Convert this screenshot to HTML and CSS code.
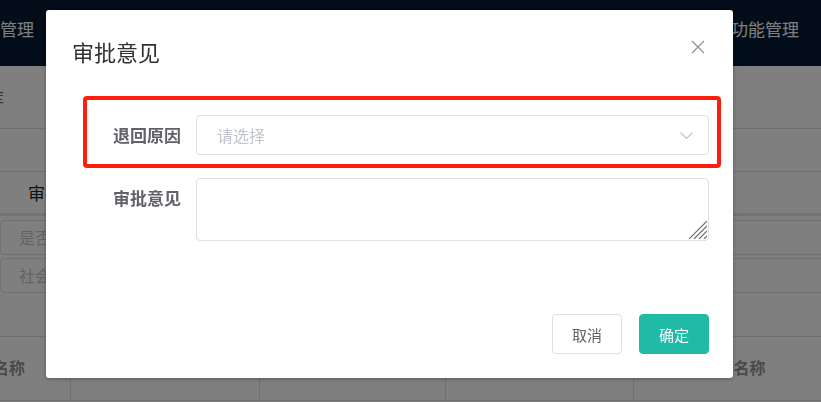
FILE: index.html
```html
<!DOCTYPE html>
<html lang="zh-CN">
<head>
    <meta charset="UTF-8">
    <meta name="viewport" content="width=device-width, initial-scale=1.0">
    <title>审批意见</title>
    <link rel="stylesheet" href="styles.css">
</head>
<body>
    <div class="page">
        <nav class="topnav">
            <span class="nav-item nav-left">管理</span>
            <span class="nav-item">功能管理</span>
        </nav>

        <div class="crumb"><span class="crumb-text">数据库</span></div>
        <div class="toolbar"></div>

        <div class="tabs">
            <span class="tab-item">审批记录</span>
        </div>

        <div class="filters">
            <div class="filter-box">是否通过</div>
            <div class="filter-box">社会信用代码</div>
        </div>

        <div class="table-head">
            <div class="th th-first">单位名称</div>
            <div class="th th-2">申报时间</div>
            <div class="th th-3">审批状态</div>
            <div class="th th-4">联系人</div>
            <div class="th th-5">项目名称</div>
        </div>
    </div>

    <!-- 遮罩 + 弹窗 -->
    <div class="mask"></div>
    <div class="dialog">
        <div class="dialog-header">
            <span class="dialog-title">审批意见</span>
            <button class="dialog-close" aria-label="关闭">
                <svg width="14" height="14" viewBox="0 0 14 14">
                    <path d="M1 1 L13 13 M13 1 L1 13" stroke="#909399" stroke-width="1.3" fill="none"/>
                </svg>
            </button>
        </div>

        <div class="dialog-body">
            <div class="form-item marked">
                <label class="form-label">退回原因</label>
                <div class="select">
                    <span class="placeholder">请选择</span>
                    <svg class="arrow" width="13" height="8" viewBox="0 0 13 8">
                        <path d="M0.5 0.5 L6.5 6.5 L12.5 0.5" stroke="#c0c4cc" stroke-width="1.2" fill="none"/>
                    </svg>
                </div>
                <div class="mark"></div>
            </div>
            <div class="form-item">
                <label class="form-label">审批意见</label>
                <div class="textarea-wrap">
                    <textarea class="textarea"></textarea>
                    <!-- 拖拽角标 -->
                    <svg class="resize-grip" width="18" height="18" viewBox="0 0 18 18">
                        <path d="M18 0 L0 18 M18 5 L5 18 M18 10 L10 18 M18 15 L15 18" stroke="#6b6b6b" stroke-width="1.2" fill="none"/>
                    </svg>
                </div>
            </div>
        </div>

        <div class="dialog-footer">
            <button class="btn">取消</button>
            <button class="btn btn-primary">确定</button>
        </div>
    </div>
</body>
</html>
```

FILE: styles.css
```css
:root {
    --primary-color: #1fbba6;
    --text-color: #303133;
    --label-color: #606266;
    --border-color: #dcdfe6;
    --placeholder: #c0c4cc;
}

* {
    box-sizing: border-box;
    margin: 0;
    padding: 0;
}

html, body {
    width: 821px;
    height: 402px;
    overflow: hidden;
}

body {
    font-family: "Noto Sans CJK SC", "Microsoft YaHei", sans-serif;
    background-color: #fff;
    color: var(--text-color);
}

/* 底层页面 */
.topnav {
    height: 66px;
    background: #041a33;
    display: flex;
    align-items: center;
    justify-content: space-between;
    padding-right: 22px;
}

.nav-item {
    color: #fff;
    font-size: 17px;
    line-height: 20px;
    margin-top: -8px;
}

.crumb {
    height: 63px;
    border-bottom: 1px solid #dedede;
    display: flex;
    align-items: center;
}

.crumb-text {
    margin-left: -44px;
    font-size: 16px;
    color: #5a6f96;
}

.toolbar {
    height: 43px;
    border-bottom: 1px solid #e2e2e2;
}

.tabs {
    height: 44px;
    border-bottom: 3px solid #e6e6e6;
    display: flex;
    align-items: center;
    padding-left: 28px;
}

.tab-item {
    font-size: 17px;
    color: #222;
}

.filters {
    padding-top: 4px;
    display: flex;
    flex-direction: column;
    gap: 3px;
    height: 121px;
    border-bottom: 1px solid #dedede;
}

.filter-box {
    width: 900px;
    height: 35px;
    border: 1px solid #e0e0e0;
    border-radius: 4px;
    padding-left: 18px;
    font-size: 16px;
    line-height: 33px;
    color: #c8c8c8;
}

.table-head {
    display: flex;
    margin-left: -84px;
    height: 64px;
    border-bottom: 1px solid #dedede;
}

.th {
    flex-shrink: 0;
    border-right: 1px solid #e0e0e0;
    display: flex;
    align-items: center;
    justify-content: center;
    font-size: 16px;
    font-weight: bold;
    color: #909399;
    padding-bottom: 4px;
}

.th-first { width: 155px; }
.th-2 { width: 189px; }
.th-3 { width: 186px; }
.th-4 { width: 188px; }
.th-5 { width: 200px; }

/* 弹窗 */
.mask {
    position: fixed;
    inset: 0;
    background: rgba(0, 0, 0, 0.5);
}

.dialog {
    position: fixed;
    left: 46px;
    top: 10px;
    width: 687px;
    background: #fff;
    border-radius: 3px;
    box-shadow: 0 1px 4px rgba(0, 0, 0, 0.3);
}

.dialog-header {
    display: flex;
    justify-content: space-between;
    padding: 26px 28px 0 26px;
}

.dialog-title {
    font-size: 22px;
    line-height: 30px;
    color: var(--text-color);
}

.dialog-close {
    background: transparent;
    border: none;
    width: 14px;
    height: 14px;
    margin-top: 4px;
    cursor: pointer;
}

.dialog-close svg {
    display: block;
}

.dialog-body {
    padding: 49px 24px 53px 40px;
}

.form-item {
    display: flex;
    align-items: flex-start;
}

.form-item + .form-item {
    margin-top: 23px;
}

.form-item.marked {
    position: relative;
}

.form-label {
    width: 110px;
    flex-shrink: 0;
    padding-right: 15px;
    text-align: right;
    font-size: 17px;
    font-weight: bold;
    line-height: 40px;
    color: var(--label-color);
}

.select {
    flex: 1;
    height: 40px;
    border: 1px solid var(--border-color);
    border-radius: 4px;
    display: flex;
    align-items: center;
    justify-content: space-between;
    padding: 0 15px 0 20px;
}

.placeholder {
    font-size: 16px;
    color: var(--placeholder);
}

.arrow {
    display: block;
    margin-top: 2px;
}

.textarea-wrap {
    flex: 1;
    position: relative;
    height: 63px;
}

.textarea {
    display: block;
    width: 100%;
    height: 63px;
    border: 1px solid var(--border-color);
    border-radius: 4px;
    resize: none;
    font-family: inherit;
    font-size: 15px;
    padding: 6px 15px;
    outline: none;
}

.resize-grip {
    position: absolute;
    right: 2px;
    bottom: 2px;
    pointer-events: none;
}

/* 标注框 */
.mark {
    position: absolute;
    left: -3px;
    top: -19px;
    right: -12px;
    bottom: -13px;
    border: 4px solid #ff1d0d;
    border-radius: 4px;
    pointer-events: none;
}

.dialog-footer {
    display: flex;
    justify-content: flex-end;
    gap: 17px;
    padding: 20px 24px 24px;
}

.btn {
    height: 40px;
    padding: 0 19px;
    border: 1px solid var(--border-color);
    border-radius: 4px;
    background: #fff;
    color: var(--label-color);
    font-family: inherit;
    font-size: 15px;
    cursor: pointer;
}

.btn-primary {
    background: var(--primary-color);
    border-color: var(--primary-color);
    color: #fff;
}
```
